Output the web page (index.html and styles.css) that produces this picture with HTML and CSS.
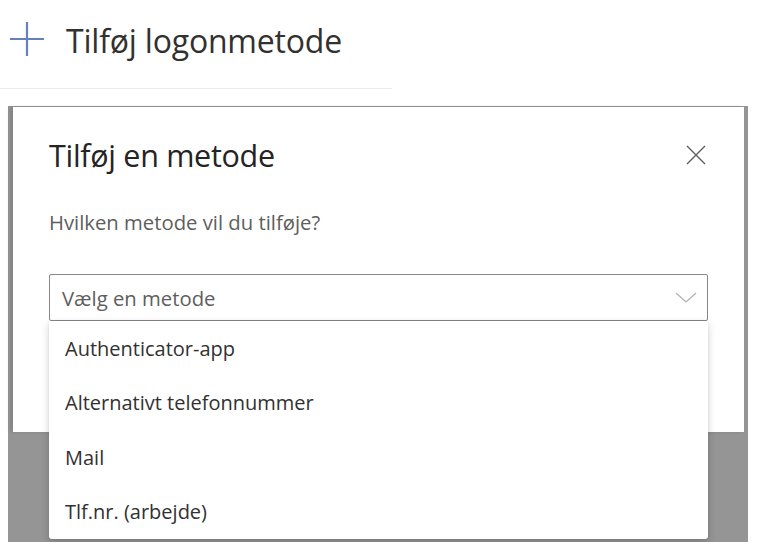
FILE: index.html
```html
<!DOCTYPE html>
<html lang="da">
<head>
<meta charset="utf-8">
<title>Tilføj logonmetode</title>
<link rel="stylesheet" href="styles.css">
</head>
<body>
<div class="topbar">
  <svg class="plus" width="36" height="36" viewBox="0 0 36 36" aria-hidden="true">
    <path d="M18 1V35M1 18H35" stroke="#6680bd" stroke-width="2.2" fill="none"/>
  </svg>
  <span class="add-label">Tilføj logonmetode</span>
</div>
<div class="divider"></div>

<div class="stage">
  <div class="modal">
    <div class="modal-head">
      <h1 class="modal-title">Tilføj en metode</h1>
      <svg class="close" width="20" height="20" viewBox="0 0 20 20" aria-hidden="true">
        <path d="M1 1L19 19M19 1L1 19" stroke="#5f5f5f" stroke-width="1.4" fill="none"/>
      </svg>
    </div>
    <p class="question">Hvilken metode vil du tilføje?</p>
    <div class="field">
      <div class="select">
        <span class="placeholder">Vælg en metode</span>
        <svg class="chevron" width="22" height="11" viewBox="0 0 22 11" aria-hidden="true">
          <path d="M1 1L11 10L21 1" stroke="#b2b2b2" stroke-width="1.3" fill="none"/>
        </svg>
      </div>
      <ul class="options">
        <li class="option">Authenticator-app</li>
        <li class="option">Alternativt telefonnummer</li>
        <li class="option">Mail</li>
        <li class="option">Tlf.nr. (arbejde)</li>
      </ul>
    </div>
  </div>
</div>
</body>
</html>
```
FILE: styles.css
```css
* { box-sizing: border-box; }

body {
  margin: 0;
  background: #ffffff;
  font-family: "Open Sans", "Noto Sans", sans-serif;
  color: #323130;
}

.topbar {
  height: 82px;
  display: flex;
  align-items: center;
  gap: 21px;
  padding-left: 9px;
  padding-bottom: 2px;
}

.plus { flex: none; margin-top: -2px; }

.add-label {
  font-size: 32px;
  color: #323130;
  letter-spacing: -0.2px;
}

.divider {
  margin-top: 6px;
  width: 392px;
  height: 1px;
  background: #ececec;
}

.stage {
  margin-top: 17px;
  margin-left: 8px;
  width: 740px;
  height: 436px;
  background: #959595;
  padding-top: 1px;
}

.modal {
  position: relative;
  margin-left: 5px;
  width: 731px;
  height: 325px;
  background: #ffffff;
  padding: 0 36px;
  box-shadow: -3px 0 4px rgba(0, 0, 0, 0.12);
}

.modal-head {
  height: 96px;
  display: flex;
  align-items: center;
  justify-content: space-between;
  padding-right: 2px;
}

.modal-title {
  margin: 0;
  font-size: 30.5px;
  font-weight: 400;
  line-height: 40px;
  color: #252423;
  letter-spacing: -0.3px;
}

.close { flex: none; }

.question {
  margin: 0;
  height: 71px;
  padding-top: 5px;
  font-size: 20.3px;
  line-height: 28px;
  color: #605e5c;
}

.field {
  position: relative;
}

.select {
  height: 47px;
  border: 1px solid #8a8886;
  border-radius: 2px;
  display: flex;
  align-items: center;
  justify-content: space-between;
  padding: 0 10px 0 12px;
}

.placeholder {
  font-size: 20.3px;
  color: #605e5c;
}

.chevron { flex: none; }

.options {
  position: absolute;
  top: 100%;
  left: 0;
  right: 0;
  margin: 0;
  padding: 0;
  list-style: none;
  background: #ffffff;
  border-radius: 0 0 3px 3px;
  box-shadow: 0 3px 8px rgba(0, 0, 0, 0.18), 0 0 2px rgba(0, 0, 0, 0.1);
  z-index: 2;
}

.option {
  height: 54.5px;
  display: flex;
  align-items: center;
  padding-left: 16px;
  font-size: 20px;
  color: #323130;
}
```
